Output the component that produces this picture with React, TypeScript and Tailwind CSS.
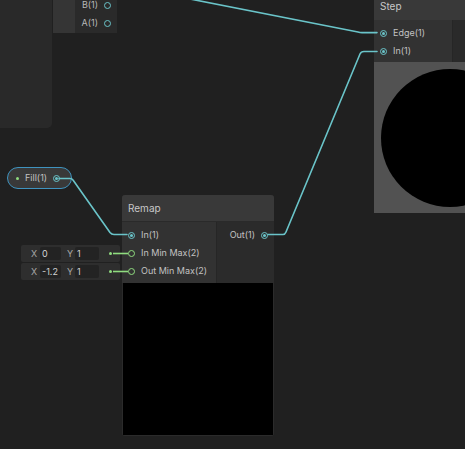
import React from 'react';

// colours picked from the shader graph screenshot
const CYAN = '#6ac4c9';
const GREEN = '#8fdc7f';

function Port({ color = CYAN, filled = true }: { color?: string; filled?: boolean }) {
  return (
    <span
      className="flex items-center justify-center w-[7px] h-[7px] rounded-full border"
      style={{ borderColor: color }}
    >
      {filled && <span className="w-[3px] h-[3px] rounded-full" style={{ background: color }} />}
    </span>
  );
}

function InRow({ label, color, filled }: { label: string; color?: string; filled?: boolean }) {
  return (
    <div className="h-[18px] flex items-center gap-[6px] pl-[6px]">
      <Port color={color} filled={filled} />
      <span className="text-[9px] text-[#c2c2c2]">{label}</span>
    </div>
  );
}

function VecInput({ x, y }: { x: string; y: string }) {
  return (
    <div className="h-[17px] w-[99px] flex items-center bg-[#2e2e2e] rounded-[2px] pl-[10px] text-[9px]">
      <span className="text-[#a8a8a8] w-[8px]">X</span>
      <span className="ml-[1px] w-[21px] h-[13px] bg-[#232323] rounded-[2px] text-[#d2d2d2] pl-[2px] leading-[13px]">{x}</span>
      <span className="text-[#a8a8a8] ml-[6px] w-[8px]">Y</span>
      <span className="w-[24px] h-[13px] bg-[#232323] rounded-[2px] text-[#d2d2d2] pl-[2px] leading-[13px]">{y}</span>
      <span className="ml-[10px] w-[3px] h-[3px] rounded-full bg-[#8fdc7f]" />
    </div>
  );
}

export default function App() {
  return (
    <div
      className="relative w-[465px] h-[449px] bg-[#202020] overflow-hidden select-none"
      style={{ fontFamily: 'Inter, "Noto Sans", sans-serif' }}
    >
      {/* node cut off on the top left */}
      <div className="absolute left-0 top-0 w-[52px] h-[128px] bg-[#292929] rounded-br-[5px]" />
      <div className="absolute left-[53px] top-0 w-[22px] h-[33px] bg-[#353535]" />
      <div className="absolute left-[75px] top-[-4px] w-[42px] h-[37px] bg-[#2a2a2a] flex flex-col pr-[6px]">
        <div className="h-[18px] flex items-center justify-end gap-[6px]">
          <span className="text-[9px] text-[#b8b8b8]">B(1)</span>
          <Port filled={false} />
        </div>
        <div className="h-[18px] flex items-center justify-end gap-[6px]">
          <span className="text-[9px] text-[#b8b8b8]">A(1)</span>
          <Port filled={false} />
        </div>
      </div>

      {/* Step node */}
      <div className="absolute left-[374px] top-[-7px] w-[151px] flex flex-col">
        <div className="h-[27px] bg-[#393939] flex items-center px-[6px] text-[10px] text-[#c8c8c8]">Step</div>
        <div className="flex h-[42px]">
          <div className="w-[78px] bg-[#323232] pt-[4px]">
            <InRow label="Edge(1)" />
            <InRow label="In(1)" />
          </div>
          <div className="flex-1 bg-[#2a2a2a] border-l border-[#262626]" />
        </div>
        <div className="h-[151px] bg-[#525252] flex items-center justify-center">
          <div className="w-[138px] h-[138px] rounded-full bg-black" />
        </div>
      </div>

      {/* Fill property */}
      <div className="absolute left-[7px] top-[167px] w-[65px] h-[22px] rounded-full border-[1.5px] border-[#3f93bf] bg-[#393939] flex items-center pl-[8px] gap-[6px]">
        <span className="w-[3px] h-[3px] rounded-full bg-[#8fdc7f]" />
        <span className="text-[9px] text-[#c2c2c2]">Fill(1)</span>
        <Port />
      </div>

      {/* Remap node */}
      <div className="absolute left-[122px] top-[195px] w-[152px] h-[241px] bg-[#2b2b2b] rounded-[3px] flex flex-col overflow-hidden">
        <div className="h-[27px] bg-[#393939] flex items-center px-[6px] text-[10px] text-[#c8c8c8] border-b border-[#2a2a2a]">Remap</div>
        <div className="flex h-[61px]">
          <div className="w-[94px] bg-[#323232] pt-[4px]">
            <InRow label="In(1)" />
            <InRow label="In Min Max(2)" color={GREEN} filled={false} />
            <InRow label="Out Min Max(2)" color={GREEN} filled={false} />
          </div>
          <div className="flex-1 bg-[#2b2b2b] border-l border-[#262626] pt-[4px]">
            <div className="h-[18px] flex items-center justify-end gap-[6px] pr-[6px]">
              <span className="text-[9px] text-[#c2c2c2]">Out(1)</span>
              <Port />
            </div>
          </div>
        </div>
        <div className="flex-1 mx-[1px] mb-[1px] bg-black" />
      </div>

      {/* inline vector inputs */}
      <div className="absolute left-[21px] top-[245px] flex flex-col gap-[1px]">
        <VecInput x="0" y="1" />
        <VecInput x="-1.2" y="1" />
      </div>

      {/* edges */}
      <svg className="absolute inset-0 pointer-events-none" width="465" height="449" fill="none">
        <g stroke={CYAN} strokeWidth="1.6" strokeLinejoin="round" strokeLinecap="round">
          <path d="M190,-1 L358,32 Q360,32.6 362,32.6 L377,32.6" />
          <path d="M268,234.5 L283,234.5 Q285,234.5 286,232 L360,54 Q361,51.5 364,51.5 L377,51.5" />
          <path d="M59,178.5 L70,178.5 Q72,178.5 73,180 L110,232.5 Q111.5,234.5 114,234.5 L127,234.5" />
        </g>
        <g stroke={GREEN} strokeWidth="1.6">
          <path d="M113,253.5 L128,253.5" />
          <path d="M113,271.5 L128,271.5" />
        </g>
      </svg>
    </div>
  );
}
